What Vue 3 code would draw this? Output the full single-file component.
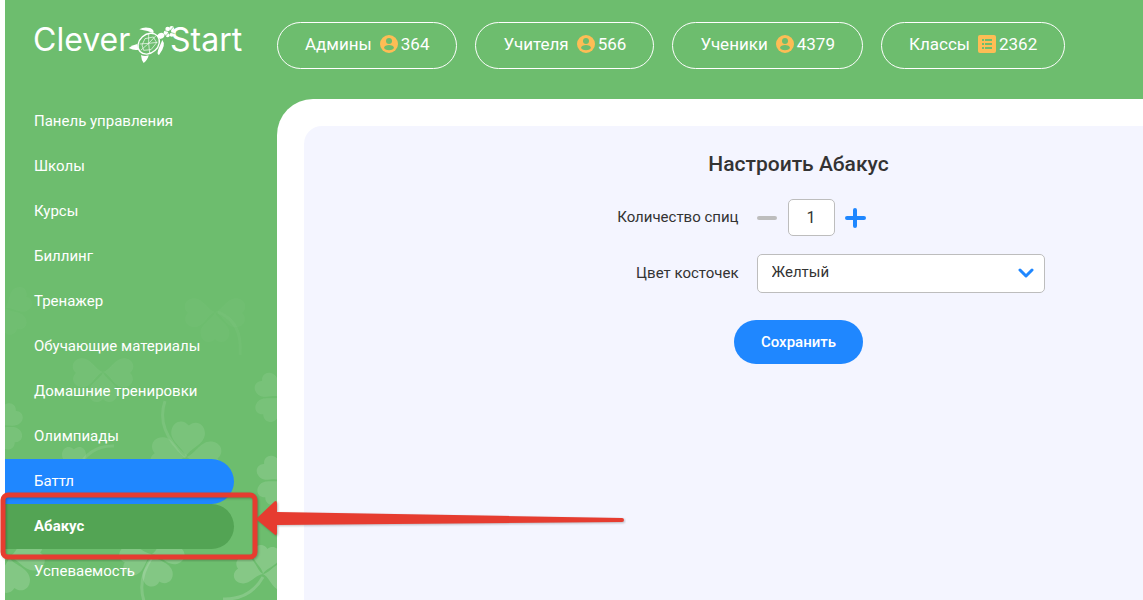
<script setup>
import { ref } from 'vue'

const stats = [
  { label: 'Админы', icon: 'user', value: 364 },
  { label: 'Учителя', icon: 'user', value: 566 },
  { label: 'Ученики', icon: 'user', value: 4379 },
  { label: 'Классы', icon: 'list', value: 2362 },
]

const menu = [
  { title: 'Панель управления' },
  { title: 'Школы' },
  { title: 'Курсы' },
  { title: 'Биллинг' },
  { title: 'Тренажер' },
  { title: 'Обучающие материалы' },
  { title: 'Домашние тренировки' },
  { title: 'Олимпиады' },
  { title: 'Баттл', state: 'hovered' },
  { title: 'Абакус', state: 'active' },
  { title: 'Успеваемость' },
]

const clovers = [
  { x: 0, y: 308, r: 150, s: 0.8, o: 0.02 },
  { x: 210, y: 312, r: 180, s: 0.9, o: 0.02 },
  { x: 98, y: 372, r: 180, s: 0.9, o: 0.05 },
  { x: 275, y: 397, r: -48, s: 0.8, o: 0.08 },
  { x: -6, y: 426, r: 48, s: 0.75, o: 0.08 },
  { x: 181, y: 457, r: 5, s: 1.05, o: 0.09 },
  { x: 69, y: 472, r: 0, s: 0.75, o: 0.09 },
  { x: 277, y: 480, r: -48, s: 0.8, o: 0.12 },
  { x: 147, y: 554, r: 165, s: 0.95, o: 0.15 },
  { x: 4, y: 557, r: 170, s: 1.05, o: 0.15 },
  { x: 258, y: 574, r: 10, s: 0.85, o: 0.17 },
]

const count = ref('1')
const color = ref('yellow')

function step(delta) {
  count.value = String(Math.max(1, (Number(count.value) || 1) + delta))
}
</script>

<template>
  <div class="app">
    <header class="header">
      <a class="logo" href="#" aria-label="CleverStart">
        <svg width="212" height="44" viewBox="0 0 212 44">
          <text x="-1" y="29" class="logo-text">Clever</text>
          <text x="136" y="29" class="logo-text">Start</text>
          <g transform="translate(94 3) scale(.3334)" fill="#fff">
            <path d="M34 13Q48 4 66 9Q80 14 76 25Q62 18 34 13Z" />
            <path d="M2 69Q12 60 28 57L31 74Q20 78 2 69Z" />
            <path d="M39 90Q50 96 62 91Q60 104 47 114Q40 106 39 90Z" />
            <path d="M103 45Q116 60 93 90Q84 88 94 66Z" />
            <path d="M86 32Q96 19 108 26Q114 38 96 42Z" />
            <ellipse cx="62" cy="56" rx="35" ry="28" fill="none" stroke="#fff" stroke-width="4" transform="rotate(-42 62 56)" />
            <path d="M62 55L38 76M62 55L83 33M62 55L62 27M62 55L35 57M62 55L88 52M62 55L65 84M42 60L51 41L76 36L86 53L69 74L47 76Z" fill="none" stroke="#fff" stroke-width="2" />
            <circle cx="119" cy="12" r="7" /><circle cx="131" cy="10" r="7" />
            <circle cx="114" cy="23" r="7" /><circle cx="136" cy="20" r="7" />
            <circle cx="119" cy="31" r="6" /><circle cx="131" cy="29" r="6" />
            <path d="M113 33L137 5M108 16L140 26" stroke="#6dbd6e" stroke-width="2" />
          </g>
        </svg>
      </a>
      <div class="stats">
        <a v-for="s in stats" :key="s.label" class="stat" href="#">
          <span>{{ s.label }}</span>
          <svg v-if="s.icon === 'user'" width="18" height="18" viewBox="0 0 18 18">
            <circle cx="9" cy="9" r="9" fill="#febd55" />
            <circle cx="9" cy="6" r="3" fill="#6dbd6e" />
            <path d="M4 13C4 9 14 9 14 13C12 16 6 16 4 13Z" fill="#6dbd6e" />
          </svg>
          <svg v-else width="18" height="18" viewBox="0 0 18 18">
            <rect width="18" height="18" rx="2" fill="#febd55" />
            <path d="M4 4h2v2H4zM4 8h2v2H4zM4 12h2v2H4zM7 4h7v2H7zM7 8h7v2H7zM7 12h7v2H7z" fill="#6dbd6e" />
          </svg>
          <span>{{ s.value }}</span>
        </a>
      </div>
    </header>

    <div class="body">
      <nav class="sidebar">
        <a v-for="m in menu" :key="m.title" href="#" class="menu-item" :class="m.state">{{ m.title }}</a>
      </nav>
      <main class="main">
        <section class="panel">
          <form class="form" @submit.prevent>
            <h1 class="title">Настроить Абакус</h1>
            <div class="fields">
              <label class="label" for="count">Количество спиц</label>
              <div class="stepper">
                <button type="button" class="step" aria-label="Меньше" @click="step(-1)">
                  <svg width="22" height="22" viewBox="0 0 22 22"><path d="M2 11H18" stroke="#bdbdbd" stroke-width="4" stroke-linecap="round" /></svg>
                </button>
                <input id="count" v-model="count" class="count" type="text" inputmode="numeric" />
                <button type="button" class="step" aria-label="Больше" @click="step(1)">
                  <svg width="22" height="22" viewBox="0 0 22 22"><path d="M3 11H20M11 3V19" stroke="#1f87ff" stroke-width="4" stroke-linecap="round" /></svg>
                </button>
              </div>
              <label class="label" for="color">Цвет косточек</label>
              <div class="select-wrap">
                <select id="color" v-model="color" class="select">
                  <option value="yellow">Желтый</option>
                </select>
                <svg class="chevron" width="16" height="10" viewBox="0 0 16 10"><path d="M2 2L8 8L14 2" fill="none" stroke="#1f87ff" stroke-width="3" stroke-linecap="round" stroke-linejoin="round" /></svg>
              </div>
            </div>
            <button class="save" type="submit">Сохранить</button>
          </form>
        </section>
      </main>
    </div>

    <svg class="clovers" width="272" height="600" viewBox="0 0 272 600" aria-hidden="true">
      <defs>
        <path id="leaf" d="M0 0C-2 -8 -17 -13 -16 -24C-15 -34 -5 -36 0 -30C5 -36 15 -34 16 -24C17 -13 2 -8 0 0Z" />
      </defs>
      <g v-for="(c, i) in clovers" :key="i" fill="#fff" :opacity="c.o" :transform="`translate(${c.x} ${c.y}) rotate(${c.r}) scale(${c.s})`">
        <use href="#leaf" />
        <use href="#leaf" transform="rotate(88)" />
        <use href="#leaf" transform="rotate(-88)" />
      </g>
      <g fill="none" stroke="#fff" stroke-width="3">
        <path d="M213 312Q238 322 235 355" opacity=".03" />
        <path d="M181 457Q150 430 160 401" opacity=".09" />
        <path d="M72 470Q84 445 109 446" opacity=".09" />
        <path d="M147 557Q132 580 139 601" opacity=".15" />
        <path d="M258 577Q245 600 218 599" opacity=".17" />
      </g>
    </svg>

    <svg class="callout" width="626" height="72" viewBox="0 0 626 72" aria-hidden="true">
      <g class="callout-shape">
        <rect x="3" y="5" width="252" height="62" rx="5" fill="none" stroke="#e63c30" stroke-width="5" />
        <path d="M256 29L274 12Q277 9 277 14V22L622 28Q624 28 624 30Q624 32 622 32L277 35V42Q277 47 274 44Z" fill="#e63c30" />
      </g>
    </svg>
  </div>
</template>

<style>
body {
  margin: 0;
  background: #fff;
}
</style>

<style scoped>
.app {
  position: relative;
  display: flex;
  flex-direction: column;
  min-height: 100vh;
  overflow: hidden;
  background: linear-gradient(90deg, #fff 5px, #6dbd6e 5px);
  font-family: Roboto, 'Open Sans', sans-serif;
  font-size: 15px;
  color: #333;
}
.app * {
  box-sizing: border-box;
}
a {
  color: #fff;
  text-decoration: none;
}
.header {
  display: flex;
  align-items: flex-start;
  height: 99px;
  padding: 22px 0 0 34px;
}
.logo {
  flex: 0 0 243px;
}
.logo svg {
  display: block;
  overflow: visible;
}
.logo-text {
  font-family: Inter, sans-serif;
  font-size: 32px;
  fill: #fff;
}
.stats {
  display: flex;
  gap: 18px;
}
.stat {
  display: flex;
  align-items: center;
  height: 47px;
  padding: 0 27px 3px;
  border: 1px solid #fff;
  border-radius: 24px;
  font-size: 17px;
  line-height: 20px;
  white-space: nowrap;
}
.stat svg {
  margin: 0 3px 0 8px;
}
.body {
  flex: 1;
  display: flex;
}
.sidebar {
  position: relative;
  z-index: 1;
  flex: 0 0 277px;
  padding: 0 43px 0 5px;
}
.menu-item {
  display: flex;
  align-items: center;
  height: 45px;
  padding: 0 0 2px 29px;
  border-radius: 0 23px 23px 0;
}
.hovered {
  background: #1f87ff;
}
.active {
  background: #53a454;
  font-weight: 700;
}
.main {
  flex: 1;
  display: flex;
  padding: 27px 0 0 27px;
  background: #fff;
  border-radius: 36px 0 0 0;
}
.panel {
  flex: 1;
  padding: 24px 0 0 150px;
  background: #f4f5ff;
  border-radius: 18px 0 0 0;
}
.form {
  display: flex;
  flex-direction: column;
  align-items: center;
}
.title {
  margin: 0 0 21px;
  font-size: 21px;
  line-height: 28px;
  font-weight: 500;
}
.fields {
  display: grid;
  grid-template-columns: 186px 288px;
  align-items: center;
  gap: 18px;
}
.label {
  padding-bottom: 2px;
  text-align: right;
}
.stepper {
  display: flex;
  align-items: center;
  gap: 9px;
}
.step {
  display: flex;
  padding: 0;
  border: 0;
  background: none;
}
.count {
  width: 47px;
  height: 37px;
  padding: 0;
  border: 1px solid #bdbdbd;
  border-radius: 5px;
  background: #fff;
  font: inherit;
  font-size: 16px;
  color: #333;
  text-align: center;
}
.select-wrap {
  position: relative;
}
.select {
  display: block;
  width: 100%;
  height: 39px;
  padding: 0 40px 3px 14px;
  border: 1px solid #bdbdbd;
  border-radius: 5px;
  background: #fff;
  appearance: none;
  font: inherit;
  color: #333;
}
.chevron {
  position: absolute;
  right: 11px;
  top: 14px;
  pointer-events: none;
}
.save {
  height: 44px;
  margin-top: 27px;
  padding: 0 27px;
  border: 0;
  border-radius: 22px;
  background: #1f87ff;
  color: #fff;
  font: inherit;
  font-weight: 500;
}
.clovers {
  position: absolute;
  left: 5px;
  top: 0;
  pointer-events: none;
}
.callout {
  position: absolute;
  z-index: 2;
  left: 0;
  top: 490px;
  pointer-events: none;
}
.callout-shape {
  filter: drop-shadow(1px 1px 1px rgba(0, 0, 0, 0.25));
}
</style>
